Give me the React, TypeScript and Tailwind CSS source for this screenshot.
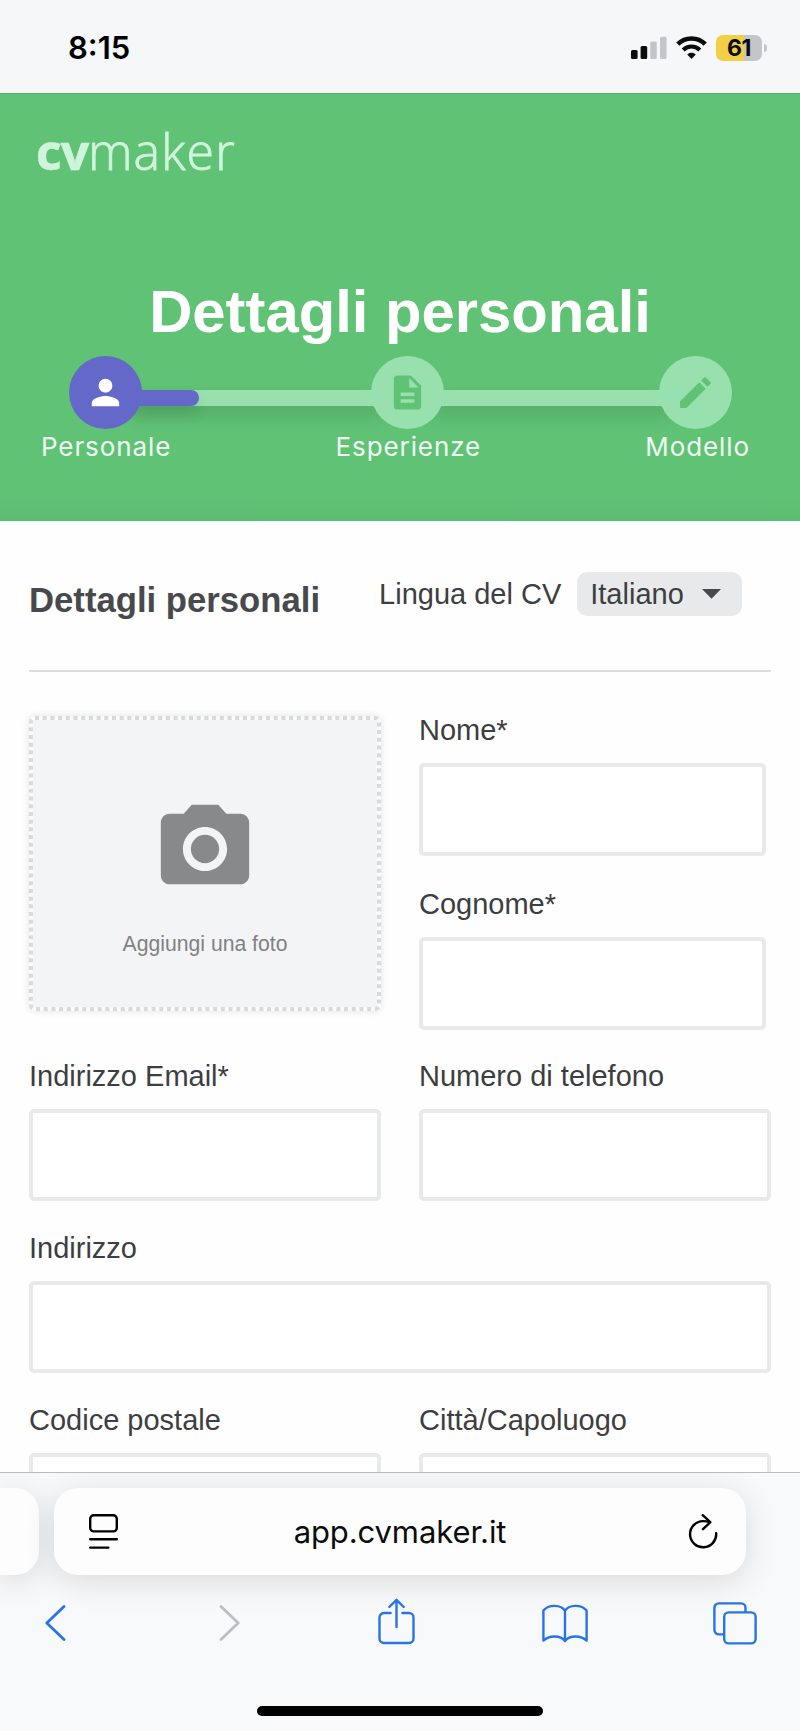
import * as React from "react";
import clsx from "clsx";
import { MdDescription, MdPerson, MdPhotoCamera } from "react-icons/md";

interface Step {
  label: string;
  icon: React.ReactNode;
}

const steps: Step[] = [
  { label: "Personale", icon: <MdPerson size={41} /> },
  { label: "Esperienze", icon: <MdDescription size={41} /> },
  { label: "Modello", icon: <PencilIcon /> },
];

export default function App() {
  return (
    <div className="flex h-[1731px] w-[800px] flex-col overflow-hidden bg-[#fefefe] font-['Liberation_Sans',Arial,sans-serif] text-[#3c3e41]">
      <StatusBar />
      <Header />
      <main className="min-h-0 flex-1 overflow-hidden px-[29px]">
        <FormHeading />
        <PersonalForm />
      </main>
      <BrowserBar />
    </div>
  );
}

function StatusBar() {
  return (
    <div className="flex h-[93px] shrink-0 items-start justify-between bg-[#f5f7f9] pl-[68px] pr-[33px] pt-[35px]">
      <span className="mt-[-5px] font-[Inter,sans-serif] text-[31px] font-semibold leading-9 text-black">8:15</span>
      <div className="flex items-center">
        <svg width="36" height="26" viewBox="0 0 36 26">
          <rect x="0" y="15" width="6.6" height="9" rx="1.5" fill="#0b0b0b" />
          <rect x="9.6" y="11" width="6.6" height="13" rx="1.5" fill="#0b0b0b" />
          <rect x="19.2" y="6.5" width="6.6" height="17.5" rx="1.5" fill="#c4c5c8" />
          <rect x="29" y="1.8" width="6.6" height="22.2" rx="1.5" fill="#c4c5c8" />
        </svg>
        <svg className="ml-[9px]" width="31" height="26" viewBox="0 0 31 26" fill="none" stroke="#0b0b0b">
          <path d="M1.8 9.2C9.4 1.5 21.6 1.5 29.2 9.2" strokeWidth="4.6" />
          <path d="M7.2 15C11.8 10.3 19.2 10.3 23.8 15" strokeWidth="4.2" />
          <path d="M11.2 19.6C13.4 17 17.6 17 19.8 19.6L15.5 24Z" fill="#0b0b0b" stroke="none" />
        </svg>
        <div className="ml-[9px] flex h-[26px] w-[46px] items-center justify-center rounded-[7px] bg-[linear-gradient(90deg,#f3cf45_61%,#c4c5c8_61%)] font-[Inter,sans-serif] text-[23px] font-bold leading-none tracking-[-0.5px] text-[#0b0b0b]">
          61
        </div>
        <div className="ml-0.5 h-[8px] w-[3px] rounded-r-full bg-[#c4c5c8]" />
      </div>
    </div>
  );
}

function Header() {
  return (
    <header className="flex h-[428px] shrink-0 flex-col border-t border-[#56a86d] bg-[#60c275] bg-[linear-gradient(to_top,rgba(0,0,0,0.035),transparent_24px)]">
      <div className="ml-[36px] mt-[22px] h-[70px] whitespace-nowrap font-['Open_Sans',sans-serif] text-[50px] leading-[70px] text-[#d0f3dc]">
        <span className="font-bold tracking-[-1px] [-webkit-text-stroke:0.6px_#d0f3dc]">cv</span>
        <span className="font-light tracking-[1.2px] [-webkit-text-stroke:0.9px_#d0f3dc]">maker</span>
      </div>
      <h1 className="mt-[90px] h-[72px] whitespace-nowrap text-center text-[59.8px] font-bold leading-[72px] text-white">
        Dettagli personali
      </h1>
      <div className="mt-[7px] flex h-[74px] items-center pl-[69px] pr-[68px]">
        <StepCircle icon={steps[0].icon} active />
        <div className="-mx-3 mt-3 h-4 w-[253px] bg-[#98e0ae] shadow-[0_10px_18px_rgba(0,0,0,0.12)]">
          <div className="h-4 w-[69px] rounded-r-full bg-[#6468c8] shadow-[0_8px_14px_rgba(0,0,0,0.1)]" />
        </div>
        <StepCircle icon={steps[1].icon} />
        <div className="-mx-3 mt-3 h-4 flex-1 bg-[#98e0ae] shadow-[0_10px_18px_rgba(0,0,0,0.12)]" />
        <StepCircle icon={steps[2].icon} />
      </div>
      <div className="flex justify-between pl-[41px] pr-[50px] font-[Inter,sans-serif] text-[26px] leading-9 tracking-[0.9px] text-[#f1fdf4]">
        {steps.map((step) => (
          <span key={step.label}>{step.label}</span>
        ))}
      </div>
    </header>
  );
}

function StepCircle({ icon, active }: { icon: React.ReactNode; active?: boolean }) {
  return (
    <div
      className={clsx(
        "z-10 flex size-[73px] shrink-0 items-center justify-center rounded-full",
        active ? "bg-[#6468c8] text-white" : "bg-[#98e0ae] text-[#60c275]",
      )}
    >
      {icon}
    </div>
  );
}

function PencilIcon() {
  return (
    <svg width="31" height="31" viewBox="0 0 31 31" fill="currentColor">
      <path d="M0 24.6V30.2Q0 31 .8 31H6.400L25.700 11.700L19.300 5.300Z" />
      <path d="M21.200 3.500L24 .7Q25 -.2 26 .7L30.300 5Q31.200 6 30.300 7L27.500 9.800Z" />
    </svg>
  );
}

function FormHeading() {
  return (
    <div className="flex h-[151px] items-start border-b-2 border-[#d9dcde]">
      <h2 className="mt-[59px] whitespace-nowrap text-[34.7px] font-bold leading-10 text-[#48494c]">
        Dettagli personali
      </h2>
      <span className="ml-[59px] mt-[53px] whitespace-nowrap text-[29px] leading-10">Lingua del CV</span>
      <button className="ml-[16px] mt-[51px] flex h-11 w-[165px] items-center rounded-[10px] bg-[#e8e9eb] pl-[13px] text-[29px] leading-10">
        Italiano
        <svg className="ml-[18px]" width="19" height="10" viewBox="0 0 19 10" fill="#48494c">
          <path d="M0 0H19L9.5 9.7Z" />
        </svg>
      </button>
    </div>
  );
}

function PersonalForm() {
  return (
    <form className="pt-[38px]">
      <div className="flex gap-x-[38px]">
        <PhotoUpload />
        <div className="w-[347px] space-y-7">
          <Field label="Nome*" tall />
          <Field label="Cognome*" tall />
        </div>
      </div>
      <div className="mt-[26px] grid grid-cols-[352px_352px] gap-x-[38px] gap-y-[27px]">
        <Field label="Indirizzo Email*" />
        <Field label="Numero di telefono" />
        <Field label="Indirizzo" wide />
        <Field label="Codice postale" />
        <Field label="Città/Capoluogo" />
      </div>
    </form>
  );
}

function PhotoUpload() {
  return (
    <div className="relative mt-[6px] flex h-[295px] w-[352px] flex-col items-center rounded-[6px] bg-[#f3f4f6] shadow-[0_0_6px_rgba(90,110,130,0.2)]">
      {/* square dots along the edge, CSS dotted borders are round */}
      <svg className="absolute inset-0" width="352" height="295" fill="none">
        <rect x="2" y="2" width="348" height="291" rx="4" stroke="#fbfbfc" strokeWidth="4" />
        <rect x="2" y="2" width="348" height="291" rx="4" stroke="#d9dadc" strokeWidth="4" strokeDasharray="4 3.7" />
      </svg>
      <MdPhotoCamera className="mt-[80px] text-[#88898b]" size={106} />
      <span className="mt-[26px] text-[21.2px] leading-8 text-[#808184]">Aggiungi una foto</span>
    </div>
  );
}

function Field({ label, tall, wide }: { label: string; tall?: boolean; wide?: boolean }) {
  return (
    <label className={clsx("block", wide && "col-span-2")}>
      <span className="block h-10 whitespace-nowrap text-[29px] leading-10">{label}</span>
      <input
        className={clsx(
          "mt-[13px] block w-full rounded-[5px] border-4 border-[#e8e9eb] bg-white",
          tall ? "h-[93px]" : "h-[92px]",
        )}
      />
    </label>
  );
}

function BrowserBar() {
  return (
    <div className="z-10 flex h-[259px] shrink-0 flex-col overflow-hidden border-t border-[#b8babd] bg-[#f8f9fb]">
      <div className="flex h-[102px] shrink-0 gap-[15px] pt-[15px]">
        <div className="h-[87px] w-[39px] rounded-r-[24px] bg-[#fdfdfe] shadow-[0_6px_32px_rgba(0,0,0,0.13)]" />
        <div className="flex h-[87px] w-[692px] items-center justify-between rounded-[24px] bg-[#fdfdfe] pl-[35px] pr-[28px] shadow-[0_6px_32px_rgba(0,0,0,0.13)]">
          <svg width="29" height="35" viewBox="0 0 29 35" fill="none" stroke="black" strokeWidth="2.4" strokeLinecap="round">
            <rect x="1.2" y="1.2" width="26.6" height="16.2" rx="3.5" />
            <path d="M1.2 25.3H27.8M1.2 33.6H19.4" />
          </svg>
          <span className="mr-[6px] font-[Inter,sans-serif] text-[31px] leading-10 tracking-[-0.1px] text-[#0c0c0d]">
            app.cvmaker.it
          </span>
          <svg width="30" height="36" viewBox="0 0 30 36" fill="none" stroke="black" strokeWidth="2.4" strokeLinecap="round" strokeLinejoin="round">
            <path d="M28.2 19.3A13.1 13.1 0 1 1 15 7.1C17.5 7.1 19.5 7.3 21.8 8.2" />
            <path d="M14.7 1.2L22.3 8.2L15 15.2" />
          </svg>
        </div>
      </div>
      <nav className="flex h-[84px] shrink-0 items-center pl-[45px] pt-[12px] text-[#2873e5]">
        <svg width="21" height="36" viewBox="0 0 21 36" fill="none" stroke="currentColor" strokeWidth="2.8" strokeLinecap="round" strokeLinejoin="round">
          <path d="M19 1.5L1.8 18L19 34.5" />
        </svg>
        <svg className="ml-[153px]" width="21" height="36" viewBox="0 0 21 36" fill="none" stroke="#bdbec1" strokeWidth="2.8" strokeLinecap="round" strokeLinejoin="round">
          <path d="M2 1.5L19.2 18L2 34.5" />
        </svg>
        <svg className="-mt-1 ml-[138px]" width="37" height="47" viewBox="0 0 37 47" fill="none" stroke="currentColor" strokeWidth="2.4" strokeLinecap="round" strokeLinejoin="round">
          <path d="M12.6 15H6A4.5 4.5 0 0 0 1.5 19.5V40.5A4.5 4.5 0 0 0 6 45H31A4.5 4.5 0 0 0 35.5 40.5V19.5A4.5 4.5 0 0 0 31 15H24.4" />
          <path d="M18.5 29V2M11.3 9L18.5 1.8L25.7 9" />
        </svg>
        <svg className="ml-[127px]" width="46" height="39" viewBox="0 0 46 39" fill="none" stroke="currentColor" strokeWidth="2.4" strokeLinejoin="round">
          <path d="M23 6.8C19 .4 6.5 .2 1.4 6.6V36.6C7 31 18.5 31 23 37C27.5 31 39 31 44.6 36.6V6.6C39.5 .2 27 .4 23 6.8V37" />
        </svg>
        <svg className="ml-[125px]" width="44" height="43" viewBox="0 0 44 43" fill="none" stroke="currentColor" strokeWidth="2.4">
          <rect x="11.2" y="10.4" width="31.4" height="31" rx="4.5" />
          <path d="M11 32.4H6A4.5 4.5 0 0 1 1.4 27.9V5.9A4.5 4.5 0 0 1 5.9 1.4H28A4.5 4.5 0 0 1 32.5 5.9V10" />
        </svg>
      </nav>
      <div className="mx-auto mt-[47px] h-[10px] w-[286px] shrink-0 rounded-full bg-black" />
    </div>
  );
}
